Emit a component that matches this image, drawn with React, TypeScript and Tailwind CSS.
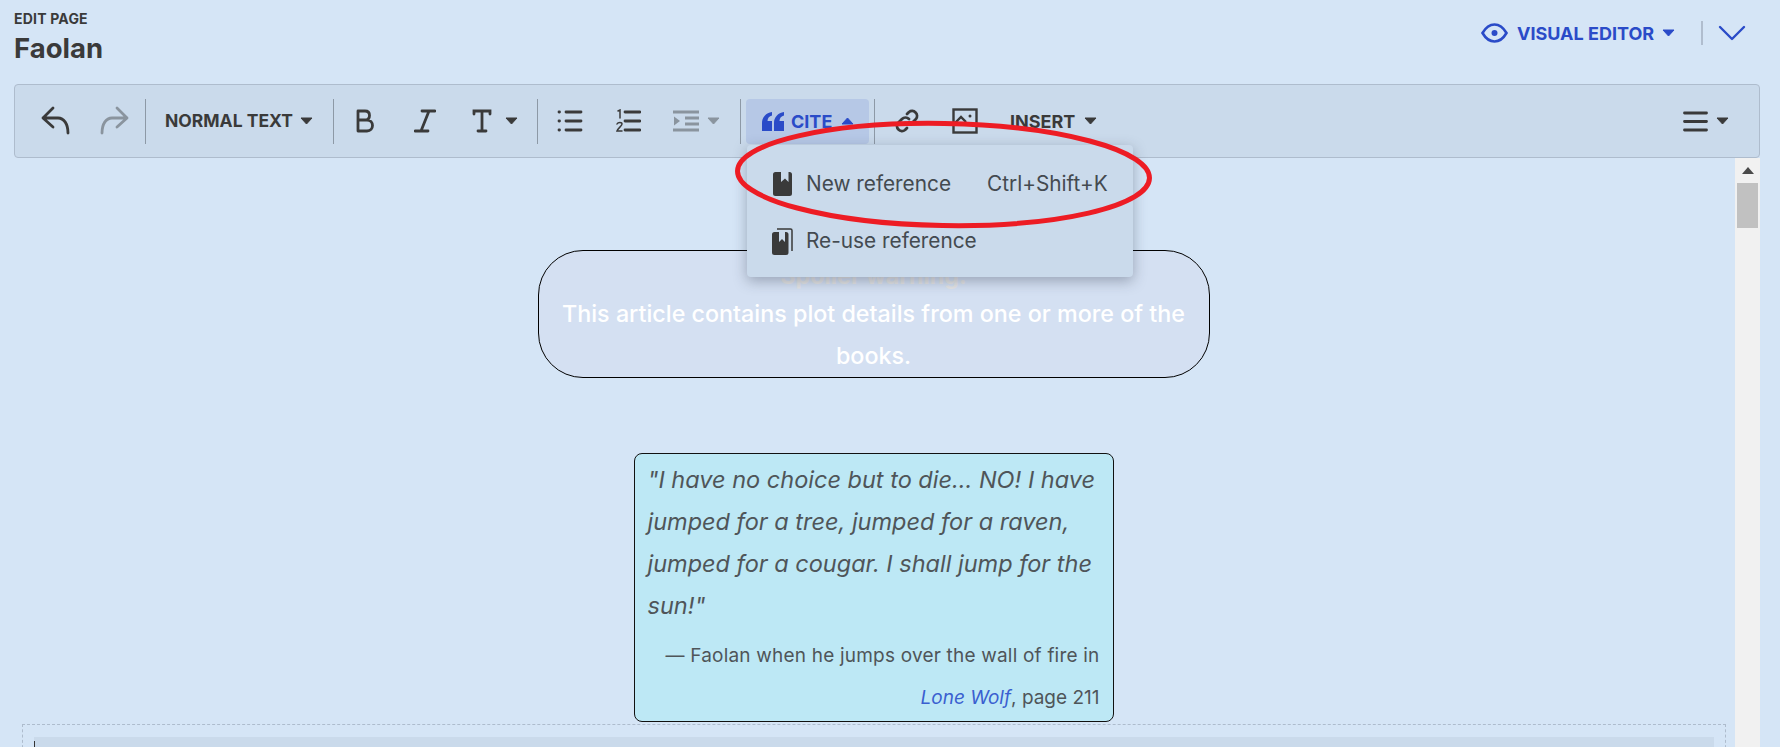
import React from 'react';

const font = "font-['Inter','Liberation_Sans',sans-serif]";

function Caret({ className = 'text-[#3a3a3a]' }: { className?: string }) {
    return (
        <svg width="13" height="8" viewBox="0 0 13 8" className={`shrink-0 ${className}`}>
            <path d="M1 1h11L6.500 7z" fill="currentColor" stroke="currentColor" strokeWidth="1" strokeLinejoin="round" />
        </svg>
    );
}

function Sep({ className = '' }: { className?: string }) {
    return <div className={`w-px h-[45px] bg-[#8d99a6] shrink-0 ${className}`} />;
}

function Toolbar() {
    return (
        <div className="relative flex items-center h-[74px] border border-[#aebccd] rounded bg-[#cadaeb] text-[#3a3a3a]">
            <svg width="30" height="30" viewBox="0 0 30 30" className="ml-[26px] shrink-0" fill="none" stroke="currentColor" strokeWidth="2.800" strokeLinecap="round" strokeLinejoin="round">
                <path d="M12 2 2 12l10 9M2 12h15c6 0 10 6 10 15" />
            </svg>
            <svg width="30" height="30" viewBox="0 0 30 30" className="ml-[28px] shrink-0 text-[#8a949e]" fill="none" stroke="currentColor" strokeWidth="2.800" strokeLinecap="round" strokeLinejoin="round">
                <path d="M18 2l10 10-10 9M28 12H13C7 12 3 18 3 27" />
            </svg>
            <Sep className="ml-[16px]" />
            <span className="ml-[19px] w-[128px] shrink-0 text-[17.500px] font-bold whitespace-nowrap">NORMAL TEXT</span>
            <Caret className="ml-[7px] text-[#3a3a3a]" />
            <Sep className="ml-[20px]" />
            <svg width="18" height="24" viewBox="0 0 18 24" className="ml-[22px] shrink-0" fill="none" stroke="currentColor" strokeWidth="2.800" strokeLinecap="round" strokeLinejoin="round">
                <path d="M2 2v20h9c3.500 0 5.500-2.500 5.500-5.500S14.500 11 11 11H2m0-9h7c3 0 4.500 2 4.500 4.500S12 11 9 11" />
            </svg>
            <svg width="22" height="24" viewBox="0 0 22 24" className="ml-[40px] shrink-0" fill="none" stroke="currentColor" strokeWidth="2.800" strokeLinecap="round">
                <path d="M8 2h13M1 22h13M15 2 7 22" />
            </svg>
            <svg width="20" height="24" viewBox="0 0 20 24" className="ml-[36px] shrink-0" fill="none" stroke="currentColor" strokeWidth="2.800" strokeLinecap="round">
                <path d="M2 5V2h16v3M10 2v20M6 22h8" />
            </svg>
            <Caret className="ml-[13px]" />
            <Sep className="ml-[19px]" />
            <svg width="26" height="22" viewBox="0 0 26 22" className="ml-[19px] shrink-0" fill="none" stroke="currentColor" strokeWidth="2.800" strokeLinecap="round">
                <path d="M9 2h15M9 11h15M9 20h15M2 2h.5M2 11h.5M2 20h.5" />
            </svg>
            <svg width="26" height="24" viewBox="0 0 26 24" className="ml-[32px] shrink-0" fill="none" stroke="currentColor" strokeWidth="2.800" strokeLinecap="round">
                <path d="M10 3h15M10 12h15M10 21h15" />
                <path d="M3 2l2-1v8" strokeWidth="1.500" />
                <path d="M2 15c1-2 5-2 5 0 0 2-4 4-5 7h5" strokeWidth="1.500" />
            </svg>
            <svg width="26" height="22" viewBox="0 0 26 22" className="ml-[32px] shrink-0 text-[#8a949e]" fill="none" stroke="currentColor" strokeWidth="2.800">
                <path d="M0 2h26M12 8h14M12 14h14M0 20h26" />
                <path d="M1 6.500 7 11l-6 4.500z" fill="currentColor" stroke="none" />
            </svg>
            <Caret className="ml-[8px] text-[#8a949e]" />
            <Sep className="ml-[20px]" />
            <div className="ml-[5px] w-[123px] h-[45px] shrink-0 flex items-center rounded bg-[#b6c8e6] text-[#2a4bc8]">
                <svg width="22" height="19" viewBox="0 0 22 19" className="ml-[16px] shrink-0" fill="currentColor">
                    <path d="M10 0C4 1 0 5 0 11v8h10V9H5.500C5.500 6 7.500 4 10 3.500zM22 0c-6 1-10 5-10 11v8h10V9h-4.500c0-3 2-5 4.500-5.500z" />
                </svg>
                <span className="ml-[7px] w-[43px] text-[18px] font-bold">CITE</span>
                <Caret className="ml-[7px] rotate-180 text-[#2a4bc8]" />
            </div>
            <Sep className="ml-[5px]" />
            <svg width="24" height="26" viewBox="0 0 24 24" className="ml-[20px] shrink-0" fill="none" stroke="currentColor" strokeWidth="2.800" strokeLinecap="round" strokeLinejoin="round">
                <path d="M10 14a5 5 0 0 0 7 0l4-4a5 5 0 0 0-7-7l-2 2" />
                <path d="M14 10a5 5 0 0 0-7 0l-4 4a5 5 0 0 0 7 7l2-2" />
            </svg>
            <svg width="26" height="26" viewBox="0 0 26 26" className="ml-[33px] shrink-0" fill="none" stroke="currentColor" strokeWidth="2.400">
                <rect x="1.500" y="1.500" width="23" height="23" />
                <path d="M3 15l6-6 5 5" />
                <circle cx="18" cy="8" r="1.500" fill="currentColor" stroke="none" />
            </svg>
            <span className="ml-[32px] w-[67px] shrink-0 text-[18px] font-bold">INSERT</span>
            <Caret className="ml-[7px]" />
            <svg width="25" height="21" viewBox="0 0 25 21" className="ml-auto shrink-0" fill="none" stroke="currentColor" strokeWidth="2.800" strokeLinecap="round">
                <path d="M1.500 2h22M1.500 10.500h22M1.500 19h22" />
            </svg>
            <Caret className="ml-[8px] mr-[30px]" />
        </div>
    );
}

function CiteMenu() {
    return (
        <div className="absolute left-[747px] top-[145px] w-[386px] h-[132px] rounded bg-[#cadaeb] shadow-[0_4px_14px_rgba(40,50,70,0.35)] text-[#444a50] text-[20.800px]">
            <div className="flex items-center h-[38px] mt-[20px] pl-[26px]">
                <svg width="19" height="24" viewBox="0 0 19 24" className="shrink-0 text-[#3a3a3a]" fill="currentColor">
                    <path d="M2.500 0H8v10l4-3.500 3.500 3.500V0h1A2.500 2.500 0 0 1 19 2.500v19a2.500 2.500 0 0 1-2.500 2.500h-14A2.500 2.500 0 0 1 0 21.500v-19A2.500 2.500 0 0 1 2.500 0z" />
                </svg>
                <span className="ml-[14px] w-[181px] whitespace-nowrap">New reference</span>
                <span className="whitespace-nowrap">Ctrl+Shift+K</span>
            </div>
            <div className="flex items-center h-[38px] mt-[19px] pl-[25px]">
                <svg width="21" height="27" viewBox="0 0 21 27" className="shrink-0 text-[#3a3a3a]" fill="currentColor">
                    <path d="M2.500 4H7v10l3-3 3 3V4h1a2.500 2.500 0 0 1 2.500 2.500v18A2.500 2.500 0 0 1 14 27H2.500A2.500 2.500 0 0 1 0 24.500v-18A2.500 2.500 0 0 1 2.500 4z" />
                    <path d="M5 1h13.500A1.500 1.500 0 0 1 20 2.500V23" fill="none" stroke="currentColor" strokeWidth="1.500" />
                </svg>
                <span className="ml-[13px] whitespace-nowrap">Re-use reference</span>
            </div>
        </div>
    );
}

export default function App() {
    return (
        <div className={`relative h-screen w-full overflow-hidden bg-[#d5e5f6] ${font}`}>
            <div className="flex items-start justify-between pl-[14px] pr-[34px] h-[84px]">
                <div className="pt-[12px] text-[#3a3a3a]">
                    <div className="text-[14px] leading-[14px] font-bold tracking-[0.2px]">EDIT PAGE</div>
                    <div className="mt-[7px] text-[27.500px] leading-[30px] font-bold">Faolan</div>
                </div>
                <div className="flex items-center h-[24px] mt-[21px] text-[#2a4bc8]">
                    <svg width="27" height="20" viewBox="0 0 27 20" fill="none" stroke="currentColor" strokeWidth="2.600">
                        <path d="M1.500 10C5 4 9 1.500 13.500 1.500S22 4 25.500 10C22 16 18 18.500 13.500 18.500S5 16 1.500 10z" />
                        <circle cx="13.500" cy="10" r="3" fill="currentColor" stroke="none" />
                    </svg>
                    <span className="ml-[9px] w-[137px] text-[18px] font-bold whitespace-nowrap">VISUAL EDITOR</span>
                    <Caret className="ml-[8px] text-[#2a4bc8]" />
                    <div className="ml-[26px] w-[2px] h-[24px] bg-[#b0bdce]" />
                    <svg width="28" height="16" viewBox="0 0 28 16" className="ml-[15px]" fill="none" stroke="currentColor" strokeWidth="2.400" strokeLinecap="round" strokeLinejoin="round">
                        <path d="M2 2l12 12L26 2" />
                    </svg>
                </div>
            </div>

            <div className="ml-[14px] mr-[20px]">
                <Toolbar />
                <div className="flex h-[589px]">
                    <div className="flex-1 min-w-0 overflow-hidden">
                        <div className="pr-[2px]">
                            <div className="mx-auto mt-[92px] w-[672px] h-[128px] rounded-[45px] border border-black bg-[#d4e0f2] text-center text-[23.300px] leading-[42px] text-white font-medium px-[10px] whitespace-nowrap">
                                <div className="h-[42px] leading-[50px] font-bold text-[#e4e4e4]">Spoiler warning:</div>
                                This article contains plot details from one or more of the<br />books.
                            </div>
                            <div className="mx-auto mt-[75px] w-[480px] h-[269px] rounded-lg border border-[#111] bg-[#bde8f5] pt-[5px] px-[13px] text-[#4f5559]">
                                <div className="italic text-[23.500px] leading-[42px] whitespace-nowrap">
                                    "I have no choice but to die... NO! I have<br />
                                    jumped for a tree, jumped for a raven,<br />
                                    jumped for a cougar. I shall jump for the<br />
                                    sun!"
                                </div>
                                <div className="mt-[8px] text-right text-[19px] leading-[42px] whitespace-nowrap">
                                    <span className="tracking-[0.2px]">— Faolan when he jumps over the wall of fire in</span><br />
                                    <span className="italic text-[#3a5fd0]">Lone Wolf</span>, page 211
                                </div>
                            </div>
                        </div>
                        <div className="mt-[2px] ml-[8px] mr-[9px] h-[40px] border border-dashed border-[#aebccd] pl-[11px] pr-[11px] pt-[12px]">
                            <div className="h-full bg-[#cadaeb] pt-[4px]">
                                <div className="w-px h-full bg-[#333]" />
                            </div>
                        </div>
                    </div>
                    <div className="w-[25px] shrink-0 bg-[#f1f1f1] px-[2px]">
                        <div className="flex justify-center items-center h-[25px]">
                            <svg width="12" height="7" viewBox="0 0 12 7"><path d="M6 0l6 7H0z" fill="#4a4a4a" /></svg>
                        </div>
                        <div className="h-[45px] bg-[#c1c1c1]" />
                    </div>
                </div>
            </div>

            <CiteMenu />

            <svg className="absolute left-0 top-0 pointer-events-none" width="1780" height="747" fill="none">
                <ellipse cx="943.500" cy="174.500" rx="206" ry="51" transform="rotate(1 943.500 174.500)" stroke="#ed1c24" strokeWidth="5" />
            </svg>
        </div>
    );
}
